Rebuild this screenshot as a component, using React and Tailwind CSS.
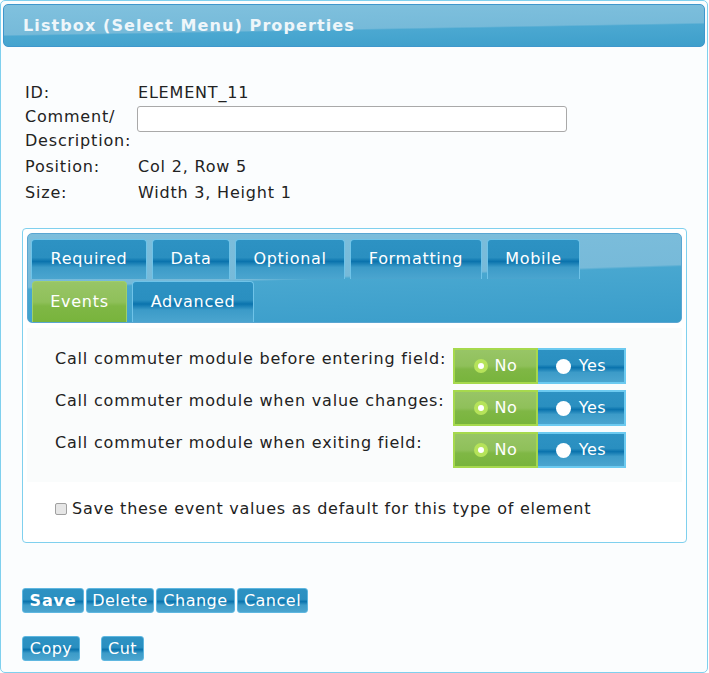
import { useState } from 'react';

const font = { fontFamily: '"DejaVu Sans", Verdana, sans-serif' };

const blueTab =
  'bg-[linear-gradient(to_bottom,#2d92c3_0%,#2a8fc0_45%,#0a73ad_55%,#3c9bc8_70%,#4ba5cf_100%)]';
const greenTab =
  'bg-[linear-gradient(to_bottom,#98c566_0%,#8fc05a_50%,#7fb745_60%,#78b43c_100%)]';

const Tab = ({ label, active, w }) => (
  <div
    className={`${active ? greenTab + ' border-[#9fcf6a]' : blueTab + ' border-[#6fc3e8]'} ${w} h-full rounded-t-[4px] border border-b-0 flex items-center justify-center text-white text-[16px] tracking-[0.7px]`}
  >
    {label}
  </div>
);

const Toggle = () => {
  const [val, setVal] = useState('no');
  return (
    <div className="flex h-[36px]">
      <button
        onClick={() => setVal('no')}
        className={`${greenTab} w-[85px] border-2 border-[#a6d94d] flex items-center justify-center gap-[7px] text-white text-[16px] tracking-[0.6px]`}
      >
        <span className="w-[14px] h-[14px] rounded-full bg-white border-[4px] border-[#b6e35a]" />
        No
      </button>
      <button
        onClick={() => setVal('yes')}
        className={`${blueTab} w-[88px] border-2 border-l-0 border-[#6ccaf0] flex items-center justify-center gap-[8px] text-white text-[16px] tracking-[0.6px]`}
      >
        <span className="w-[15px] h-[15px] rounded-full bg-white" />
        Yes
      </button>
    </div>
  );
};

const Btn = ({ children, bold, w }) => (
  <button
    className={`${blueTab} ${w} h-[25px] rounded-[3px] border border-[#5fb7e0] text-white text-[16px] leading-none flex items-center justify-center ${bold ? 'font-bold' : 'tracking-[0.5px]'}`}
  >
    {children}
  </button>
);

const events = [
  'Call commuter module before entering field:',
  'Call commuter module when value changes:',
  'Call commuter module when exiting field:',
];

export default function App() {
  return (
    <div style={font} className="w-[709px] h-[673px] bg-white">
      <div className="w-[708px] h-[673px] border border-[#7fd0ee] rounded-[5px] bg-[#fbfdfe] pt-[3px] px-[2px] text-[#222] text-[16px] tracking-[0.8px]">
        {/* title bar */}
        <div className="h-[43px] rounded-[5px] border border-[#3f97cc] bg-[linear-gradient(179deg,#80c1de_0%,#76bad9_56%,#4ba8d1_59%,#3e9fcb_100%)] flex items-center pl-[19px]">
          <h1 className="text-[#eef6fa] font-bold text-[16px] tracking-[1.1px]">
            Listbox (Select Menu) Properties
          </h1>
        </div>

        {/* info */}
        <div className="pl-[22px] pt-[34px] leading-[24px]">
          <div className="flex">
            <span className="w-[113px]">ID:</span>
            <span>ELEMENT_11</span>
          </div>
          <div className="flex">
            <span className="w-[112px]">
              Comment/
              <br />
              Description:
            </span>
            <input className="mt-[1px] w-[430px] h-[26px] border border-[#a9a9a9] rounded-[3px] bg-white" />
          </div>
          <div className="flex mt-[2px]">
            <span className="w-[113px]">Position:</span>
            <span>Col 2, Row 5</span>
          </div>
          <div className="flex mt-[2px]">
            <span className="w-[113px]">Size:</span>
            <span>Width 3, Height 1</span>
          </div>
        </div>

        {/* tab panel */}
        <div className="mt-[23px] ml-[19px] w-[665px] h-[315px] border border-[#7fd0ee] rounded-[4px] bg-white p-[4px]">
          <div className="h-[90px] rounded-[5px] border border-[#5aa6d2] bg-[linear-gradient(178deg,#7dbedc_0%,#77bad9_48%,#48a7d0_50%,#3a9dca_100%)] px-[3px] pt-[5px] flex flex-col gap-[2px]">
            <div className="flex gap-[5px] h-[40px]">
              <Tab label="Required" w="w-[116px]" />
              <Tab label="Data" w="w-[78px]" />
              <Tab label="Optional" w="w-[110px]" />
              <Tab label="Formatting" w="w-[132px]" />
              <Tab label="Mobile" w="w-[93px]" />
            </div>
            <div className="flex gap-[5px] h-[42px] pl-[1px]">
              <Tab label="Events" w="w-[95px]" active />
              <Tab label="Advanced" w="w-[122px]" />
            </div>
          </div>

          <div className="bg-[#fafcfc] mt-[5px] pt-[20px] pb-[14px] pl-[28px] flex flex-col gap-[6px]">
            {events.map((e) => (
              <div key={e} className="flex">
                <span className="w-[398px] leading-[22px]">{e}</span>
                <Toggle />
              </div>
            ))}
          </div>
          <label className="flex items-center gap-[5px] pl-[28px] mt-[15px]">
            <input
              type="checkbox"
              className="appearance-none w-[12px] h-[12px] border border-[#a0a0a0] rounded-[2px] bg-[#e6e6e6]"
            />
            <span className="tracking-[0.75px]">Save these event values as default for this type of element</span>
          </label>
        </div>

        {/* buttons */}
        <div className="pl-[19px] mt-[45px] flex gap-[2px]">
          <Btn bold w="w-[62px]">Save</Btn>
          <Btn w="w-[68px]">Delete</Btn>
          <Btn w="w-[79px]">Change</Btn>
          <Btn w="w-[71px]">Cancel</Btn>
        </div>
        <div className="pl-[19px] mt-[23px] flex gap-[21px]">
          <Btn w="w-[58px]">Copy</Btn>
          <Btn w="w-[43px]">Cut</Btn>
        </div>
      </div>
    </div>
  );
}
